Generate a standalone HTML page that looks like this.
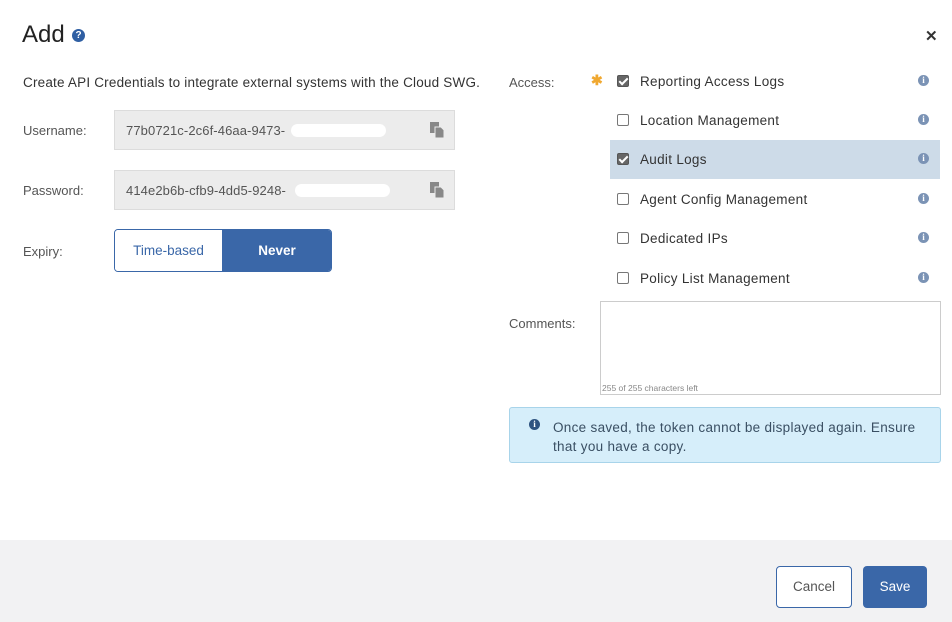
<!DOCTYPE html>
<html><head><meta charset="utf-8"><style>
*{margin:0;padding:0;box-sizing:border-box}
body{width:952px;height:622px;background:#fff;font-family:"Liberation Sans",sans-serif;color:#333;position:relative;overflow:hidden}
.a{position:absolute}
.lbl{font-size:13px;color:#555}
.inp{background:#ececec;border:1px solid #dcdcdc;width:341px;height:40px;font-size:13px;color:#555;padding:12px 0 0 11px;letter-spacing:0.1px}
.blot{position:absolute;top:13px;width:95px;height:13px;background:#fff;border-radius:7px}
.cp{position:absolute;right:10px;top:11px;width:14px;height:16px}
.row{position:absolute;left:610px;width:330px;height:39px}
.cb{position:absolute;left:7px;top:13px;width:12px;height:12px;border:1px solid #777;border-radius:2px;background:#fff}
.cb.on{background:#666;border-color:#555}
.cb.on:after{content:"";position:absolute;left:3px;top:0px;width:3px;height:7px;border:solid #fff;border-width:0 2px 2px 0;transform:rotate(45deg)}
.rt{position:absolute;left:30px;top:12px;font-size:13.5px;color:#333;letter-spacing:0.3px}
.ii{position:absolute;left:308px;top:13px;width:11px;height:11px;border-radius:50%;background:#7b93b5;color:#fff;font:bold 9px "Liberation Serif",serif;text-align:center;line-height:11px}
</style></head><body>
<div class="a" style="left:22px;top:21px;font-size:24px;color:#222">Add</div>
<div class="a" style="left:72px;top:29px;width:13px;height:13px;border-radius:50%;background:#2f5fa3;color:#fff;font:bold 10px 'Liberation Sans';text-align:center;line-height:13px">?</div>
<div class="a" style="left:925px;top:27px;font-size:15px;font-weight:bold;color:#333">✕</div>

<div class="a" style="left:23px;top:75px;font-size:13.5px;color:#333;letter-spacing:0.2px">Create API Credentials to integrate external systems with the Cloud SWG.</div>

<div class="a lbl" style="left:23px;top:123px">Username:</div>
<div class="a inp" style="left:114px;top:110px">77b0721c-2c6f-46aa-9473-<div class="blot" style="left:176px"></div>
<svg class="cp" viewBox="0 0 14 16"><rect x="0" y="0" width="9" height="11" fill="#888"/><path d="M5 5h6l3 3v8H5z" fill="#888" stroke="#ececec" stroke-width="1"/></svg></div>
<div class="a lbl" style="left:23px;top:183px">Password:</div>
<div class="a inp" style="left:114px;top:170px">414e2b6b-cfb9-4dd5-9248-<div class="blot" style="left:180px"></div>
<svg class="cp" viewBox="0 0 14 16"><rect x="0" y="0" width="9" height="11" fill="#888"/><path d="M5 5h6l3 3v8H5z" fill="#888" stroke="#ececec" stroke-width="1"/></svg></div>

<div class="a lbl" style="left:23px;top:244px">Expiry:</div>
<div class="a" style="left:114px;top:229px;width:218px;height:43px;border:1px solid #3a67a8;border-radius:4px;overflow:hidden">
<div class="a" style="left:0;top:0;width:107px;height:41px;background:#fff;color:#3a67a8;font-size:13.5px;text-align:center;line-height:41px">Time-based</div>
<div class="a" style="left:107px;top:0;width:110px;height:41px;background:#3a67a8;color:#fff;font-size:13.5px;font-weight:bold;text-align:center;line-height:41px">Never</div>
</div>

<div class="a lbl" style="left:509px;top:75px">Access:</div>
<div class="a" style="left:591px;top:72px;color:#f0a830;font-size:14px;font-weight:bold">✱</div>
<div class="row" style="top:62px"><div class="cb on"></div><div class="rt">Reporting Access Logs</div><div class="ii">i</div></div>
<div class="row" style="top:101px"><div class="cb"></div><div class="rt">Location Management</div><div class="ii">i</div></div>
<div class="row" style="top:140px;background:#cddbe8"><div class="cb on"></div><div class="rt">Audit Logs</div><div class="ii">i</div></div>
<div class="row" style="top:180px"><div class="cb"></div><div class="rt">Agent Config Management</div><div class="ii">i</div></div>
<div class="row" style="top:219px"><div class="cb"></div><div class="rt">Dedicated IPs</div><div class="ii">i</div></div>
<div class="row" style="top:259px"><div class="cb"></div><div class="rt">Policy List Management</div><div class="ii">i</div></div>

<div class="a lbl" style="left:509px;top:316px">Comments:</div>
<div class="a" style="left:600px;top:301px;width:341px;height:94px;border:1px solid #ccc;background:#fff"><div class="a" style="left:1px;bottom:1px;font-size:8.5px;color:#888">255 of 255 characters left</div></div>

<div class="a" style="left:509px;top:407px;width:432px;height:56px;background:#d6eefa;border:1px solid #a8d4ea;border-radius:3px">
<div class="a" style="left:19px;top:11px;width:11px;height:11px;border-radius:50%;background:#2f5380;color:#fff;font:bold 9px 'Liberation Serif';text-align:center;line-height:11px">i</div>
<div class="a" style="left:43px;top:10px;font-size:13.5px;line-height:19px;color:#3a4f63;width:380px;letter-spacing:0.3px">Once saved, the token cannot be displayed again. Ensure that you have a copy.</div>
</div>

<div class="a" style="left:0;top:540px;width:952px;height:82px;background:#f2f2f3"></div>
<div class="a" style="left:776px;top:566px;width:76px;height:42px;border:1px solid #3a67a8;border-radius:4px;background:#fff;color:#555;font-size:13.5px;text-align:center;line-height:40px">Cancel</div>
<div class="a" style="left:863px;top:566px;width:64px;height:42px;border-radius:4px;background:#3a67a8;color:#fff;font-size:13.5px;text-align:center;line-height:42px">Save</div>
</body></html>
